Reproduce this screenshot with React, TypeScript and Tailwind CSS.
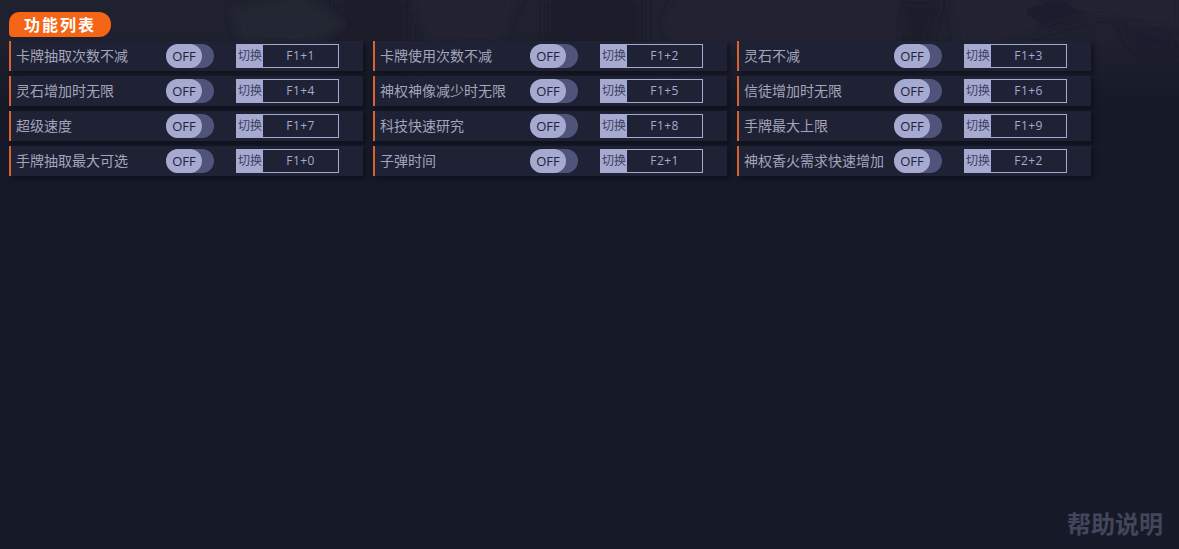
const F = '"Open Sans","Noto Sans CJK SC",sans-serif';
const items: [string, string][] = [
  ['卡牌抽取次数不减', 'F1+1'], ['卡牌使用次数不减', 'F1+2'], ['灵石不减', 'F1+3'],
  ['灵石增加时无限', 'F1+4'], ['神权神像减少时无限', 'F1+5'], ['信徒增加时无限', 'F1+6'],
  ['超级速度', 'F1+7'], ['科技快速研究', 'F1+8'], ['手牌最大上限', 'F1+9'],
  ['手牌抽取最大可选', 'F1+0'], ['子弹时间', 'F2+1'], ['神权香火需求快速增加', 'F2+2'],
];

function Row({ name, hotkey }: { name: string; hotkey: string }) {
  return (
    <div className="flex h-[30px] w-[354px] items-center border-l-2 border-[#d9622d] bg-[#1f2135] pl-[5px] shadow-[3px_3px_4px_rgba(8,9,16,0.5)]">
      <span className="w-[150px] shrink-0 whitespace-nowrap text-[14px] leading-[30px] text-[#a3a5bb]">{name}</span>
      <div className="flex h-6 w-12 shrink-0 rounded-full bg-[#50547a]">
        <div className="flex h-6 w-9 items-center justify-center rounded-full bg-[#a6a9d0] pt-px text-[13px] text-[#20233a]">OFF</div>
      </div>
      <div className="ml-[22px] flex h-6 w-[103px] shrink-0 border border-[#a6a9d0]">
        <div className="flex w-[26px] shrink-0 items-center justify-center whitespace-nowrap bg-[#a6a9d0] text-[12px] text-[#3d4060]">切换</div>
        <div className="flex flex-1 items-center justify-center text-[12px] tracking-[0.4px] text-[#a6a9d0]">{hotkey}</div>
      </div>
    </div>
  );
}

function Backdrop() {
  return (
    <svg className="absolute left-0 top-0" width="1179" height="110" viewBox="0 0 1179 110">
      <defs>
        <linearGradient id="fade" x1="0" y1="0" x2="0" y2="1">
          <stop offset="0" stopColor="#fff" />
          <stop offset="0.35" stopColor="#fff" />
          <stop offset="1" stopColor="#000" />
        </linearGradient>
        <mask id="m"><rect width="1179" height="110" fill="url(#fade)" /></mask>
        <filter id="b"><feGaussianBlur stdDeviation="4" /></filter>
      </defs>
      <g mask="url(#m)">
        <rect width="1179" height="110" fill="#1f212e" />
        <g filter="url(#b)">
          <rect x="335" y="-5" width="75" height="100" fill="#1b1d2b" />
          <rect x="545" y="-5" width="100" height="100" fill="#1a1c2b" />
          <polygon points="664,20 680,-5 900,-5 900,100 690,100" fill="#232430" />
          <polygon points="950,-5 1179,-5 1179,30 1100,15 1010,40 960,60" fill="#232430" />
          <rect x="770" y="14" width="45" height="5" fill="#1c1e2a" />
          <rect x="860" y="14" width="40" height="5" fill="#1c1e2a" />
          <polygon points="900,0 940,0 925,60 905,60" fill="#1c1e2c" />
          <polygon points="230,10 300,-5 350,25 300,45 240,40" fill="#242531" />
          <polygon points="410,-5 520,-5 500,45 430,40" fill="#232430" />
          <polygon points="1020,10 1060,0 1090,15 1050,30" fill="#1c1f2d" />
          <polygon points="1120,20 1179,35 1179,60 1130,45" fill="#1c1f2d" />
        </g>
      </g>
    </svg>
  );
}

export default function App() {
  return (
    <div className="relative h-[549px] w-[1179px] overflow-hidden bg-[#161928] pl-[9px] pt-3" style={{ fontFamily: F }}>
      <Backdrop />
      <div className="relative">
        <div className="flex h-[25px] w-[102px] items-center justify-center rounded-tl-[10px] rounded-tr-[12px] rounded-br-[12px] rounded-bl-[4px] bg-[#f46517] text-[16px] font-bold tracking-[2px] text-white">功能列表</div>
        <div className="mt-1 grid w-[1082px] grid-cols-[354px_354px_354px] gap-x-[10px] gap-y-[5px]">
          {items.map(([n, k]) => <Row key={k} name={n} hotkey={k} />)}
        </div>
      </div>
      <div className="absolute bottom-[9px] right-[16px] text-[24px] leading-[32px] font-bold text-[#43465a]">帮助说明</div>
    </div>
  );
}
